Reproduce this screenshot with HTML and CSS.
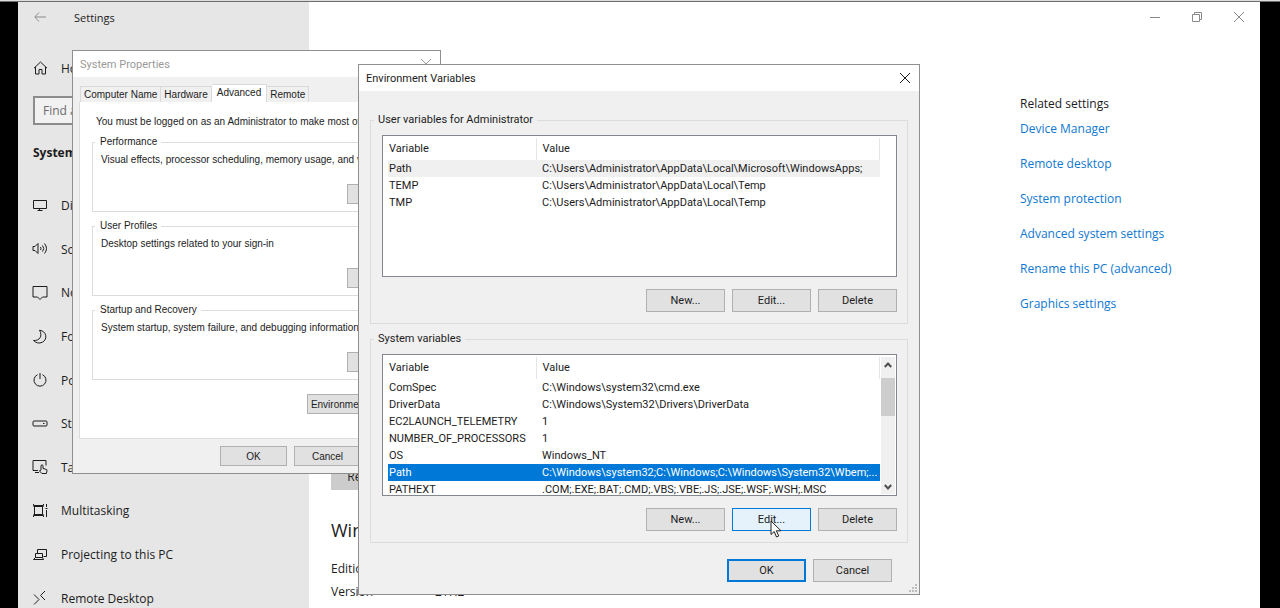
FILE: index.html
```html
<!DOCTYPE html>
<html lang="en">
<head>
<meta charset="utf-8">
<title>Settings</title>
<link rel="stylesheet" href="styles.css">
</head>
<body>
<div class="desktop">
  <div class="settings">
    <aside class="sidebar">
      <header class="sidebar-title">
        <button class="icon-button back" aria-label="Back"><svg width="12" height="10" viewBox="0 0 12 10"><path d="M5 .5.8 5 5 9.500M1 5h11"/></svg></button>
        <span>Settings</span>
      </header>
      <a class="nav-item home" href="#"><svg width="16" height="16" viewBox="0 0 16 16"><path d="M2 8.200 8.500 2 15 8.200M3.500 7v7H7V9.500h3V14h3.500V7"/></svg>Home</a>
      <input class="search" type="text" placeholder="Find a setting" aria-label="Find a setting">
      <h2 class="nav-heading">System</h2>
      <nav class="nav">
        <a class="nav-item" href="#"><svg width="16" height="16" viewBox="0 0 16 16"><path d="M1.500 2.500h13v8h-13zM7.500 11v1.500M5.500 12.500h5"/></svg>Display</a>
        <a class="nav-item" href="#"><svg width="16" height="16" viewBox="0 0 16 16"><path d="M1 5.500h2l3-3v10l-3-3H1zM8.500 6q1 1.500 0 3M10.500 4.500q2.500 3 0 6M12.500 2.500q4 5 0 10"/></svg>Sound</a>
        <a class="nav-item" href="#"><svg width="16" height="16" viewBox="0 0 16 16"><path d="M1 1.500h14V12h-4.500L8 14.500 5.500 12H1z"/></svg>Notifications &amp; actions</a>
        <a class="nav-item" href="#"><svg width="16" height="16" viewBox="0 0 16 16"><path d="M7.500 1.200c7 .8 8.500 9 3 12q-5 2.300-9-1.700C7.500 12 11 7 7.500 1.200z"/></svg>Focus assist</a>
        <a class="nav-item" href="#"><svg width="16" height="16" viewBox="0 0 16 16"><path d="M5.500 2.700a6 6 0 1 0 5 0M8 1v6"/></svg>Power &amp; sleep</a>
        <a class="nav-item" href="#"><svg width="16" height="16" viewBox="0 0 16 16"><path d="M2 5h12q1 0 1 1v3q0 1-1 1H2q-1 0-1-1V6q0-1 1-1zM11 7.500h1.500"/></svg>Storage</a>
        <a class="nav-item" href="#"><svg width="16" height="16" viewBox="0 0 16 16"><path d="M6 11.500H1v-10h13v5M3 13.500h4M9 11V6.500q1-1.500 2 0v3l3 .8q1.200.3 1 1.500l-.6 2.700h-4.500L7.500 12q.5-1.500 1.500-.3"/></svg>Tablet</a>
        <a class="nav-item" href="#"><svg width="16" height="16" viewBox="0 0 16 16"><path d="M1.500 3.500h10M1.500 11.500h10M2.500 3.500v8M10.500 3.500v8M1.500 1v1.500h10V1M1.500 14v-1.500h10V14M14.500 1v3M14.500 7v7M13.500 5.500h2"/></svg>Multitasking</a>
        <a class="nav-item" href="#"><svg width="16" height="16" viewBox="0 0 16 16"><path d="M5.500 6V2.500h9v7h-3M3.500 6.500h7v4h-7zM1.500 12.500l2-2h7l1 2z"/></svg>Projecting to this PC</a>
        <a class="nav-item" href="#"><svg width="16" height="16" viewBox="0 0 16 16"><path d="m2 4.500 5 5-5 5M13 1 8.500 5.500 13 10"/></svg>Remote Desktop</a>
      </nav>
    </aside>
    <main class="content">
      <div class="window-controls">
        <button class="icon-button" aria-label="Minimize"><svg width="10" height="10" viewBox="0 0 10 10"><path d="M0 5.500h10"/></svg></button>
        <button class="icon-button" aria-label="Restore"><svg width="10" height="10" viewBox="0 0 10 10"><path d="M.5 2.500h7v7h-7zM2.500 2.500v-2h7v7h-2"/></svg></button>
        <button class="icon-button" aria-label="Close"><svg width="10" height="10" viewBox="0 0 10 10"><path d="m0 0 10 10M10 0 0 10"/></svg></button>
      </div>
      <div class="columns">
        <section class="about">
          <button class="rename">Rename this PC</button>
          <h1>Windows specifications</h1>
          <dl class="specs">
            <dt>Edition</dt><dd>Windows Server</dd>
            <dt>Version</dt><dd>21H2</dd>
            <dt>Installed on</dt><dd>10/12/2022</dd>
          </dl>
        </section>
        <section class="related">
          <h3>Related settings</h3>
          <a href="#">Device Manager</a>
          <a href="#">Remote desktop</a>
          <a href="#">System protection</a>
          <a href="#">Advanced system settings</a>
          <a href="#">Rename this PC (advanced)</a>
          <a href="#">Graphics settings</a>
        </section>
      </div>
    </main>
  </div>

  <div class="dialog props" role="dialog" aria-label="System Properties">
    <header class="dialog-title inactive">
      <span>System Properties</span>
      <button class="icon-button" aria-label="Close"><svg width="10" height="10" viewBox="0 0 10 10"><path d="m0 0 10 10M10 0 0 10"/></svg></button>
    </header>
    <div class="props-body">
      <div class="tabs" role="tablist">
        <button class="tab" role="tab">Computer Name</button>
        <button class="tab" role="tab">Hardware</button>
        <button class="tab active" role="tab">Advanced</button>
        <button class="tab" role="tab">Remote</button>
      </div>
      <div class="panel">
        <p class="notice">You must be logged on as an Administrator to make most of these changes.</p>
        <fieldset class="group">
          <legend>Performance</legend>
          <p>Visual effects, processor scheduling, memory usage, and virtual memory</p>
          <button class="button">Settings...</button>
        </fieldset>
        <fieldset class="group">
          <legend>User Profiles</legend>
          <p>Desktop settings related to your sign-in</p>
          <button class="button">Settings...</button>
        </fieldset>
        <fieldset class="group">
          <legend>Startup and Recovery</legend>
          <p>System startup, system failure, and debugging information</p>
          <button class="button">Settings...</button>
        </fieldset>
        <button class="button wide">Environment Variables...</button>
      </div>
      <div class="props-actions">
        <button class="button">OK</button>
        <button class="button">Cancel</button>
        <button class="button">Apply</button>
      </div>
    </div>
  </div>

  <div class="dialog env" role="dialog" aria-label="Environment Variables">
    <header class="dialog-title">
      <span>Environment Variables</span>
      <button class="icon-button" aria-label="Close"><svg width="10" height="10" viewBox="0 0 10 10"><path d="m0 0 10 10M10 0 0 10"/></svg></button>
    </header>
    <div class="env-body">
      <fieldset class="vars">
        <legend>User variables for Administrator</legend>
        <div class="list">
          <table>
            <thead><tr><th class="name">Variable</th><th>Value</th></tr></thead>
            <tbody>
              <tr class="muted"><td>Path</td><td>C:\Users\Administrator\AppData\Local\Microsoft\WindowsApps;</td></tr>
              <tr><td>TEMP</td><td>C:\Users\Administrator\AppData\Local\Temp</td></tr>
              <tr><td>TMP</td><td>C:\Users\Administrator\AppData\Local\Temp</td></tr>
            </tbody>
          </table>
        </div>
        <div class="actions">
          <button class="button">New...</button>
          <button class="button">Edit...</button>
          <button class="button">Delete</button>
        </div>
      </fieldset>
      <fieldset class="vars">
        <legend>System variables</legend>
        <div class="list">
          <table>
            <thead><tr><th class="name">Variable</th><th>Value</th></tr></thead>
            <tbody>
              <tr><td>ComSpec</td><td>C:\Windows\system32\cmd.exe</td></tr>
              <tr><td>DriverData</td><td>C:\Windows\System32\Drivers\DriverData</td></tr>
              <tr><td>EC2LAUNCH_TELEMETRY</td><td>1</td></tr>
              <tr><td>NUMBER_OF_PROCESSORS</td><td>1</td></tr>
              <tr><td>OS</td><td>Windows_NT</td></tr>
              <tr class="selected"><td>Path</td><td>C:\Windows\system32;C:\Windows;C:\Windows\System32\Wbem;...</td></tr>
              <tr><td>PATHEXT</td><td>.COM;.EXE;.BAT;.CMD;.VBS;.VBE;.JS;.JSE;.WSF;.WSH;.MSC</td></tr>
            </tbody>
          </table>
          <div class="scrollbar">
            <button class="up" aria-label="Scroll up"><svg width="8" height="6" viewBox="0 0 8 6"><path d="M.8 5 4 1.500 7.200 5"/></svg></button>
            <div class="thumb"></div>
            <button class="down" aria-label="Scroll down"><svg width="8" height="6" viewBox="0 0 8 6"><path d="M.8 1 4 4.500 7.200 1"/></svg></button>
          </div>
        </div>
        <div class="actions">
          <button class="button">New...</button>
          <button class="button hover">Edit...</button>
          <button class="button">Delete</button>
        </div>
      </fieldset>
      <div class="env-actions">
        <button class="button default">OK</button>
        <button class="button">Cancel</button>
      </div>
    </div>
    <svg class="grip" width="8" height="8" viewBox="0 0 8 8"><path d="M6 0h2v2H6zM3 3h2v2H3zM6 3h2v2H6zM0 6h2v2H0zM3 6h2v2H3zM6 6h2v2H6z"/></svg>
  </div>

  <svg class="cursor" width="12" height="18" viewBox="0 0 12 18"><path d="M1 1v13.500l3.200-3L6.500 17l2.200-1-2.300-5.200H11z"/></svg>
</div>
</body>
</html>
```
FILE: styles.css
```css
* { box-sizing: border-box; }

body {
  margin: 0;
  overflow: hidden;
  border-top: 1px solid #dedede;
  background: #000;
  color: #1c1c1c;
  font-family: "Open Sans", "Noto Sans", sans-serif;
  font-size: 12px;
}

button, input { font: inherit; color: inherit; }
p, h1, h2, h3, dl, dd { margin: 0; }
a { color: inherit; text-decoration: none; }
svg { flex: none; fill: none; stroke: currentColor; }

.desktop {
  position: relative;
  height: calc(100vh - 1px);
  overflow: hidden;
  border-top: 1px solid #6c6c6c;
  padding: 0 20px 0 18px;
}

.settings { display: flex; min-height: 100%; background: #fff; }

.sidebar {
  flex: none;
  width: 291px;
  background: #e6e6e6;
}

.icon-button {
  display: flex;
  align-items: center;
  justify-content: center;
  padding: 0;
  border: 0;
  background: none;
}

.sidebar-title {
  display: flex;
  align-items: center;
  gap: 28px;
  height: 30px;
  padding-left: 16px;
  font-size: 11px;
}
.back { color: #8a8a8a; }

.nav-item {
  display: flex;
  align-items: center;
  gap: 13px;
  padding-left: 14px;
  white-space: nowrap;
}
.home { height: 44px; margin-top: 14px; }

.search {
  display: block;
  width: 262px;
  height: 29px;
  margin: 6px 14px 0 15px;
  padding: 0 8px;
  border: 2px solid #8c8c8c;
  background: #f2f2f2;
}
.search::placeholder { color: #6c6c6c; }

.nav-heading {
  margin: 17px 0 0 15px;
  font-size: 12px;
  line-height: 22px;
  font-weight: 700;
}

.nav { display: flex; flex-direction: column; height: 436px; margin-top: 20px; }
.nav .nav-item { flex: 1; }

.content { flex: 1; display: flex; flex-direction: column; min-width: 0; }

.window-controls { display: flex; height: 30px; justify-content: flex-end; color: #8a8a8a; }
.window-controls .icon-button { width: 42px; }

.columns { display: flex; flex: 1; padding-left: 22px; }
.about { flex: 1; padding-top: 431px; }

.rename { width: 120px; height: 27px; border: 0; background: #ccc; }

h1 { margin-top: 27px; font-size: 18px; line-height: 26px; font-weight: 400; }

.specs {
  display: grid;
  grid-template-columns: 104px 1fr;
  margin-top: 14px;
  line-height: 23px;
}

.related { width: 240px; padding-top: 61px; }
.related h3 { font-size: 12px; line-height: 22px; font-weight: 400; }
.related a { display: block; height: 35px; line-height: 28px; color: #0f78d0; }

.dialog {
  position: absolute;
  border: 1px solid #8f8f8f;
  background: #f0f0f0;
  font-family: Roboto, "Open Sans", sans-serif;
  font-size: 11px;
}
.dialog p, .dialog legend, .dialog .button { white-space: nowrap; }

.dialog-title {
  display: flex;
  align-items: center;
  justify-content: space-between;
  height: 26px;
  padding: 0 9px 0 7px;
  background: #fff;
}
.inactive { color: #999; }

.button {
  height: 23px;
  padding: 0;
  border: 1px solid #b0b0b0;
  background: #e1e1e1;
}

.props { left: 72px; top: 48px; width: 369px; }
.props-body {
  padding: 7px 5px 7px 6px;
  font-family: "Liberation Sans", Arial, sans-serif;
  font-size: 10px;
}
.props .button { width: 67px; height: 20px; }

.tabs { display: flex; align-items: flex-end; height: 18px; padding-left: 1px; }
.tab {
  height: 16px;
  padding: 0 3px;
  border: 1px solid #dadada;
  border-bottom: 0;
  border-left-width: 0;
  background: #f0f0f0;
}
.tab:first-child { border-left-width: 1px; }
.tab.active { height: 18px; padding: 0 5px 2px; background: #fff; }

.panel {
  height: 337px;
  padding: 12px 11px 0 12px;
  border: 1px solid #dcdcdc;
  border-top: 0;
  background: #fff;
}
.notice { padding-left: 4px; line-height: 16px; }

.group {
  height: 77px;
  min-width: 0;
  margin: 5px 0 7px;
  padding: 3px 8px;
  border: 1px solid #dcdcdc;
}
.group legend { padding: 0 4px 0 5px; margin-left: -6px; line-height: 14px; }
.group p { line-height: 16px; }
.group .button { display: block; margin: 16px 0 0 auto; }
.panel .wide { display: block; width: 116px; margin: 14px 0 0 auto; }

.props-actions { display: flex; justify-content: flex-end; gap: 7px; padding-top: 7px; }

.env { left: 358px; top: 62px; width: 562px; }
.env-body { padding: 22px 11px 12px; }

.vars {
  min-width: 0;
  height: 211px;
  margin: 0 0 8px;
  padding: 8px 10px 0 11px;
  border: 1px solid #dcdcdc;
}
.vars legend { padding: 0 4px; margin-left: -8px; line-height: 14px; }

.list {
  display: flex;
  height: 142px;
  padding: 2px 1px 1px 5px;
  border: 1px solid #828790;
  background: #fff;
  overflow: hidden;
}
.list table {
  flex: none;
  width: 492px;
  height: min-content;
  table-layout: fixed;
  border-collapse: collapse;
  white-space: nowrap;
}
.list th {
  height: 22px;
  padding: 0 0 1px 6px;
  border-right: 1px solid #e5e5e5;
  font-weight: 400;
  text-align: left;
}
.list .name { width: 148px; padding-left: 1px; }
.list td { height: 17px; padding: 0 0 0 6px; line-height: 17px; }
.list td:first-child { padding-left: 1px; }
.muted { background: #f0f0f0; }
.selected { background: #0078d7; color: #fff; }

.scrollbar {
  display: flex;
  flex: 1;
  flex-direction: column;
  margin-left: 1px;
  background: #f0f0f0;
}
.scrollbar button {
  display: flex;
  align-items: center;
  justify-content: center;
  height: 21px;
  padding: 0;
  border: 0;
  background: none;
}
.scrollbar .up { padding-bottom: 6px; }
.scrollbar .down { padding-top: 6px; }
.scrollbar svg { stroke-width: 2; color: #505050; }
.thumb { height: 38px; margin-bottom: auto; background: #cdcdcd; }

.actions { display: flex; justify-content: flex-end; gap: 7px; margin-top: 12px; }
.env .button { width: 79px; }
.env .hover { border-color: #0078d7; background: #e5f1fb; }
.env .default { border: 2px solid #0078d7; }
.env-actions { display: flex; justify-content: flex-end; gap: 7px; padding: 8px 16px 0 0; }

.grip {
  position: absolute;
  right: 2px;
  bottom: 2px;
  stroke: none;
  fill: #bdbdbd;
}

.cursor { position: absolute; left: 770px; top: 518px; fill: #fff; stroke: #222; }
```
